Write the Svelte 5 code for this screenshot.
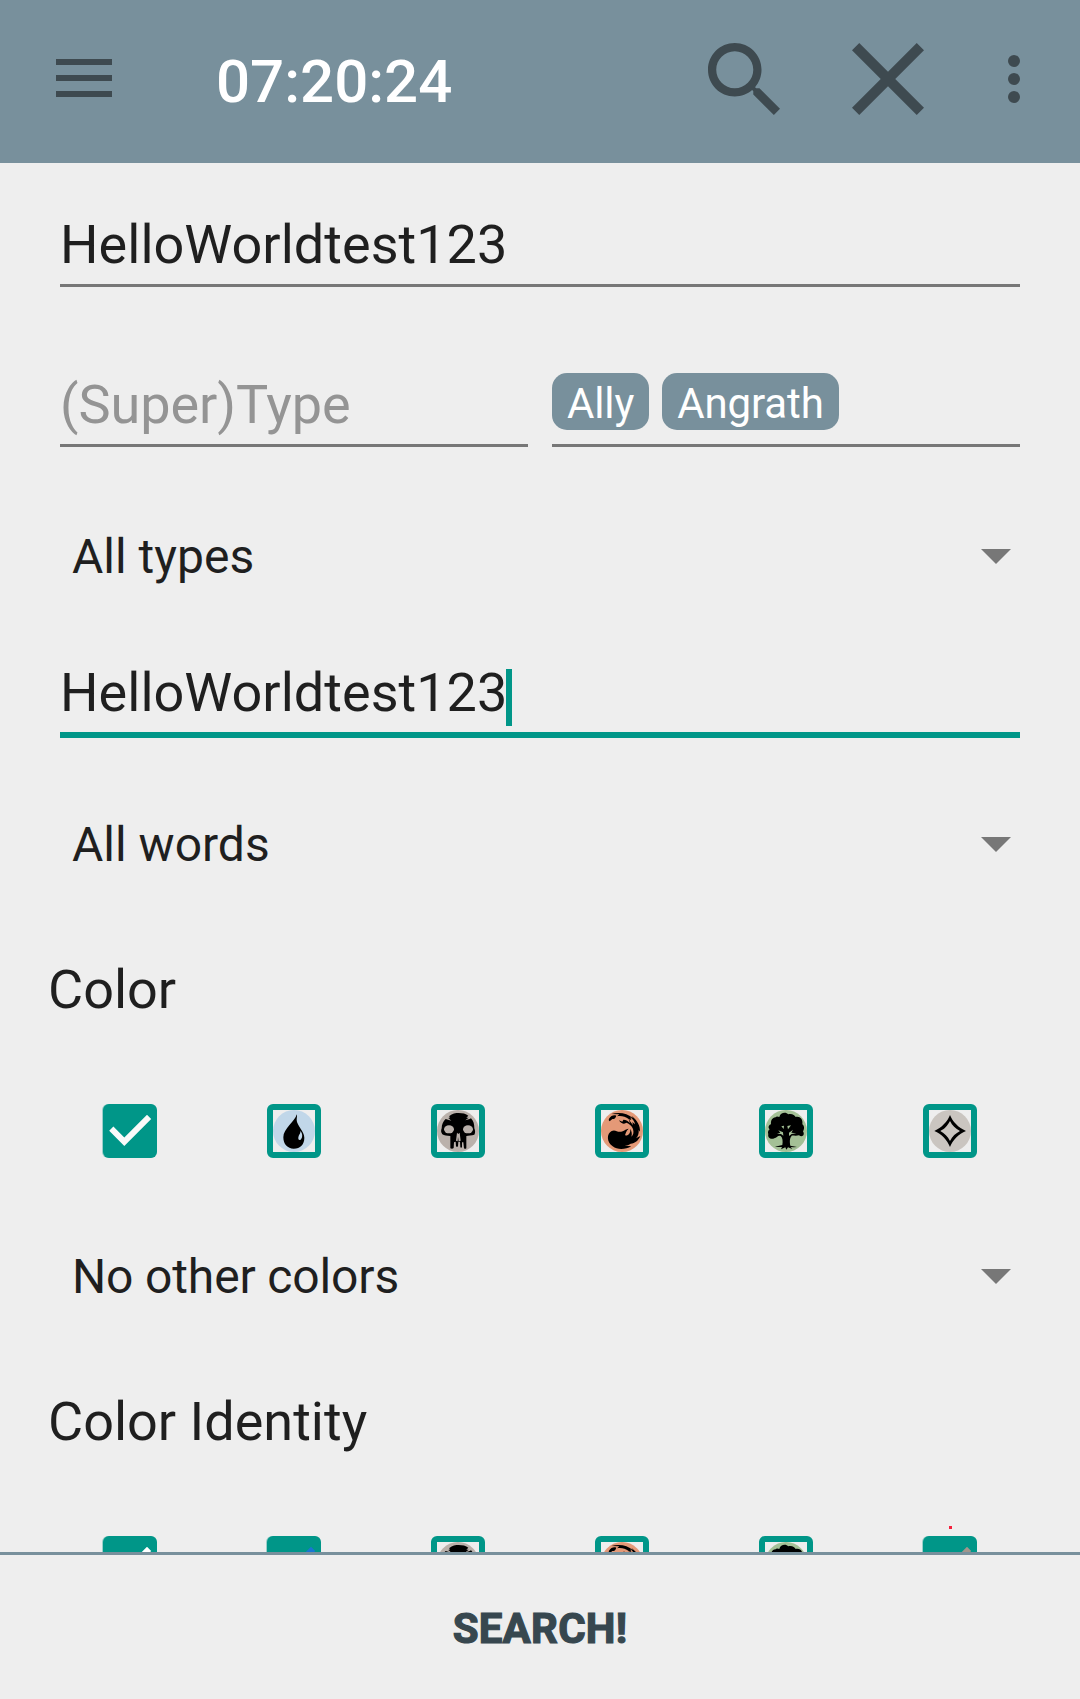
<script>
  const manaRow = ['white', 'blue', 'black', 'red', 'green', 'colorless'];
  const sections = [
    { title: 'Color', checked: { white: '#fafafa' }, select: 'No other colors' },
    {
      title: 'Color Identity',
      checked: { white: '#ffffff', blue: '#1976d2', colorless: '#a1958c' },
      select: null
    }
  ];
  const chips = ['Ally', 'Angrath'];
</script>

{#snippet select(label, tight = false)}
  <div class="select">
    <span class:tight>{label}</span>
    <svg class="arrow" viewBox="0 0 30 15"><path d="M0 0h30L15 15z" /></svg>
  </div>
{/snippet}

{#snippet mana(kind)}
  <svg class="mana" viewBox="0 0 126 126">
    {#if kind === 'blue'}
      <circle cx="63" cy="63" r="63" fill="#c1d7e9" />
      <path d="M71 13C67 34 31 56 31 82C31 103 44 116 62 116C82 116 94 103 94 83C94 64 71 46 71 30C71 24 73 19 71 13Z" />
      <path fill="#c1d7e9" d="M82 63C89 69 90 84 82 90C75 91 75 84 77 78C79 73 83 70 82 63Z" />
    {:else if kind === 'black'}
      <circle cx="63" cy="63" r="63" fill="#bab1ab" />
      <path d="M37 18C46 10 56 9 65 9C76 9 87 11 94 17L88 23L95 23L85 31L98 27L102 25C110 33 112 43 112 55C115 62 115 70 112 74C104 77 94 76 88 78L88 115Q85 118 81 115L79 97L75 97L75 112Q72 114 70 112L69 95L64 95L63 109Q60 112 57 109L56 95L51 97L50 114Q46 118 40 115L40 78C30 77 21 77 16 73C11 66 12 61 14 55C14 43 19 33 26 27L43 32L33 23L38 25Z" />
      <ellipse cx="36" cy="58" rx="15" ry="12" fill="#bab1ab" />
      <ellipse cx="93" cy="58" rx="15" ry="12" fill="#bab1ab" />
      <path fill="#bab1ab" d="M60 68L57 92L62 94L63 80L65 94L71 92L68 68L64 72Z" />
    {:else if kind === 'red'}
      <circle cx="63" cy="63" r="63" fill="#e49977" />
      <path d="M31 12C54 5 79 9 96 25L91 17C109 31 118 46 117 65L113 60C114 71 111 79 105 85L118 78C112 92 102 100 89 101C84 104 78 107 71 107L91 109C73 119 49 120 35 109C16 96 17 70 32 63C43 57 49 68 60 65C71 63 71 58 83 56C76 62 74 69 72 76C81 78 89 71 88 56C92 65 94 71 91 80C97 75 99 68 96 57C93 47 83 40 76 38C67 45 58 39 54 31L64 35L67 29C75 29 83 34 87 40L83 27C73 20 60 16 48 19L55 13Z" />
      <path d="M25 25C30 17 38 14 46 17C44 26 37 28 34 27L26 34C22 31 23 28 25 25Z" />
      <path fill="#e49977" d="M88 22C97 29 101 36 102 43L94 36L96 46C91 39 86 32 84 28L91 30Z" />
    {:else if kind === 'green'}
      <circle cx="63" cy="63" r="63" fill="#a4c096" />
      <path d="M28 85C17 90 7 82 10 72C8 69 9 61 14 58C8 53 11 45 18 43C17 32 21 23 32 22Q34 18 43 21C46 7 63 5 70 13C80 9 90 17 92 21C105 18 115 28 112 43C120 49 117 61 114 64C121 76 111 83 102 76C92 79 84 76 80 77C75 84 73 91 76 107L96 111Q86 112 77 111L82 117L69 112L64 119L61 112L48 118L51 111Q38 112 30 110L52 105C54 94 53 83 47 78C39 74 35 84 28 85Z" />
      <path fill="#a4c096" d="M40 61L54 67L55 77L48 72L36 71L46 68ZM49 49L57 47L56 57ZM67 48L78 46L69 58ZM72 68L84 59L79 68L94 70L80 72L72 78Z" />
    {:else}
      <circle cx="63" cy="63" r="63" fill="#cac5c0" />
      <path fill-rule="evenodd" d="M63 15C70 34 88 53 111 63C89 72 71 90 63 111C55 90 38 72 16 63C38 53 56 34 63 15ZM63 33C55 48 47 56 34 63C47 71 56 79 63 93C70 79 80 70 93 63C79 55 70 47 63 33Z" />
    {/if}
  </svg>
{/snippet}

<div class="app">
  <header>
    <svg class="menu" viewBox="0 0 56 38"><path d="M0 0h56v6H0zM0 16h56v6H0zM0 32h56v6H0z" /></svg>
    <h1>07:20:24</h1>
    <svg class="action search" viewBox="3 3 17.49 17.49">
      <path d="M15.5 14h-.79l-.28-.27C15.41 12.59 16 11.11 16 9.5 16 5.91 13.09 3 9.5 3S3 5.91 3 9.5 5.91 16 9.5 16c1.61 0 3.09-.59 4.23-1.57l.27.28v.79l5 4.99L20.49 19l-4.99-5zm-6 0C7.01 14 5 11.99 5 9.5S7.01 5 9.5 5 14 7.01 14 9.5 11.99 14 9.5 14z" />
    </svg>
    <svg class="action close" viewBox="5 5 14 14">
      <path d="M19 6.41L17.59 5 12 10.59 6.41 5 5 6.41 10.59 12 5 17.59 6.41 19 12 13.41 17.59 19 19 17.59 13.41 12z" />
    </svg>
    <svg class="more" viewBox="0 0 12 48"><circle cx="6" cy="6" r="6" /><circle cx="6" cy="24" r="6" /><circle cx="6" cy="42" r="6" /></svg>
  </header>

  <main>
    <div class="field name">HelloWorldtest123</div>

    <div class="pair">
      <div class="field hint">(Super)Type</div>
      <div class="field chips">
        {#each chips as chip}<span class="chip">{chip}</span>{/each}
      </div>
    </div>
    <div class="after-pair">{@render select('All types')}</div>

    <div class="field focused">HelloWorldtest123<i class="caret"></i></div>
    <div class="after-focused">{@render select('All words')}</div>

    {#each sections as section}
      <h2>{section.title}</h2>
      <div class="checks">
        {#each manaRow as kind}
          <div class="cell">
            {#if section.checked[kind]}
              <div class="box on">
                <svg viewBox="0 0 54 54"><path fill={section.checked[kind]} d="M6.2 26.8L10.4 22.6L21.3 33.5L44 10.8L48.2 15L21.3 42z" /></svg>
                {#if kind === 'colorless'}<i class="dot"></i>{/if}
              </div>
            {:else}
              <div class="box">{@render mana(kind)}</div>
            {/if}
          </div>
        {/each}
      </div>
      {#if section.select}
        <div class="after-checks">{@render select(section.select, true)}</div>
      {/if}
    {/each}
  </main>

  <footer><button>SEARCH!</button></footer>
</div>

<style>
  :global(body) {
    margin: 0;
  }
  .app {
    display: flex;
    flex-direction: column;
    width: 1080px;
    height: 1699px;
    overflow: hidden;
    background: #eeeeee;
    color: #1f1f1f;
    font-family: Roboto, sans-serif;
  }
  svg {
    display: block;
    flex: none;
  }
  header {
    display: flex;
    align-items: center;
    flex: none;
    box-sizing: border-box;
    height: 163px;
    padding: 0 60px 5px 56px;
    background: #78909c;
    fill: #3e4a50;
  }
  .menu {
    width: 56px;
    height: 38px;
    margin-top: -2px;
  }
  h1 {
    flex: 1;
    margin: 5px 0 0 104px;
    color: #fff;
    font-size: 60px;
    font-weight: 500;
    line-height: 71px;
  }
  .action {
    width: 72px;
    height: 72px;
  }
  .close {
    margin: 0 84px 0 72px;
  }
  .more {
    width: 12px;
    height: 48px;
  }
  main {
    flex: 1;
    min-height: 0;
    overflow: hidden;
    padding: 0 60px;
  }
  .field {
    display: flex;
    height: 71px;
    border-bottom: 3px solid #777;
    font-size: 54px;
    line-height: 63px;
    letter-spacing: 0.03px;
    white-space: nowrap;
  }
  .name {
    margin-top: 50px;
  }
  .pair {
    display: grid;
    grid-template-columns: 1fr 1fr;
    gap: 24px;
    margin-top: 86px;
  }
  .hint {
    color: #949494;
    letter-spacing: -0.06px;
  }
  .chips {
    gap: 13px;
  }
  .chip {
    box-sizing: border-box;
    height: 57px;
    padding: 6px 15px 2px;
    border-radius: 15px;
    background: #78909c;
    color: #fff;
    font-size: 42px;
    line-height: 49px;
    letter-spacing: -0.12px;
  }
  .focused {
    margin-top: 76px;
    border-bottom: 6px solid #009688;
  }
  .caret {
    width: 6px;
    height: 57px;
    margin: 8px 0 0 -1px;
    background: #009688;
  }
  .select {
    display: flex;
    align-items: center;
    justify-content: space-between;
    padding: 0 9px 0 12px;
    font-size: 48px;
    line-height: 57px;
  }
  .tight {
    letter-spacing: -0.15px;
  }
  .arrow {
    width: 30px;
    height: 15px;
    fill: #777;
  }
  .after-pair {
    margin-top: 81px;
  }
  .after-focused {
    margin-top: 78px;
  }
  .after-checks {
    margin-top: 90px;
  }
  h2 {
    margin: 85px -12px 83px;
    font-size: 54px;
    font-weight: 400;
    line-height: 63px;
  }
  .checks {
    display: grid;
    grid-template-columns: repeat(6, 1fr);
    margin: 0 -12px;
  }
  .cell {
    display: flex;
    justify-content: center;
  }
  .box {
    position: relative;
    box-sizing: border-box;
    width: 54px;
    height: 54px;
    border: 6px solid #009688;
    border-radius: 6px;
  }
  .box.on {
    border: 0;
    background: #009688;
    box-shadow: -1px 0 0 rgba(0, 150, 136, 0.35);
  }
  .mana {
    width: 42px;
    height: 42px;
  }
  .dot {
    position: absolute;
    top: -10px;
    left: 26px;
    width: 3px;
    height: 3px;
    background: #f5203c;
  }
  footer {
    flex: none;
    box-sizing: border-box;
    height: 147px;
    padding-top: 49px;
    border-top: 3px solid #78909c;
    text-align: center;
  }
  button {
    padding: 0;
    border: 0;
    background: none;
    color: #37474f;
    font: 700 42px/49px Roboto, sans-serif;
    letter-spacing: 0.2px;
    -webkit-text-stroke: 1.2px #37474f;
  }
</style>
